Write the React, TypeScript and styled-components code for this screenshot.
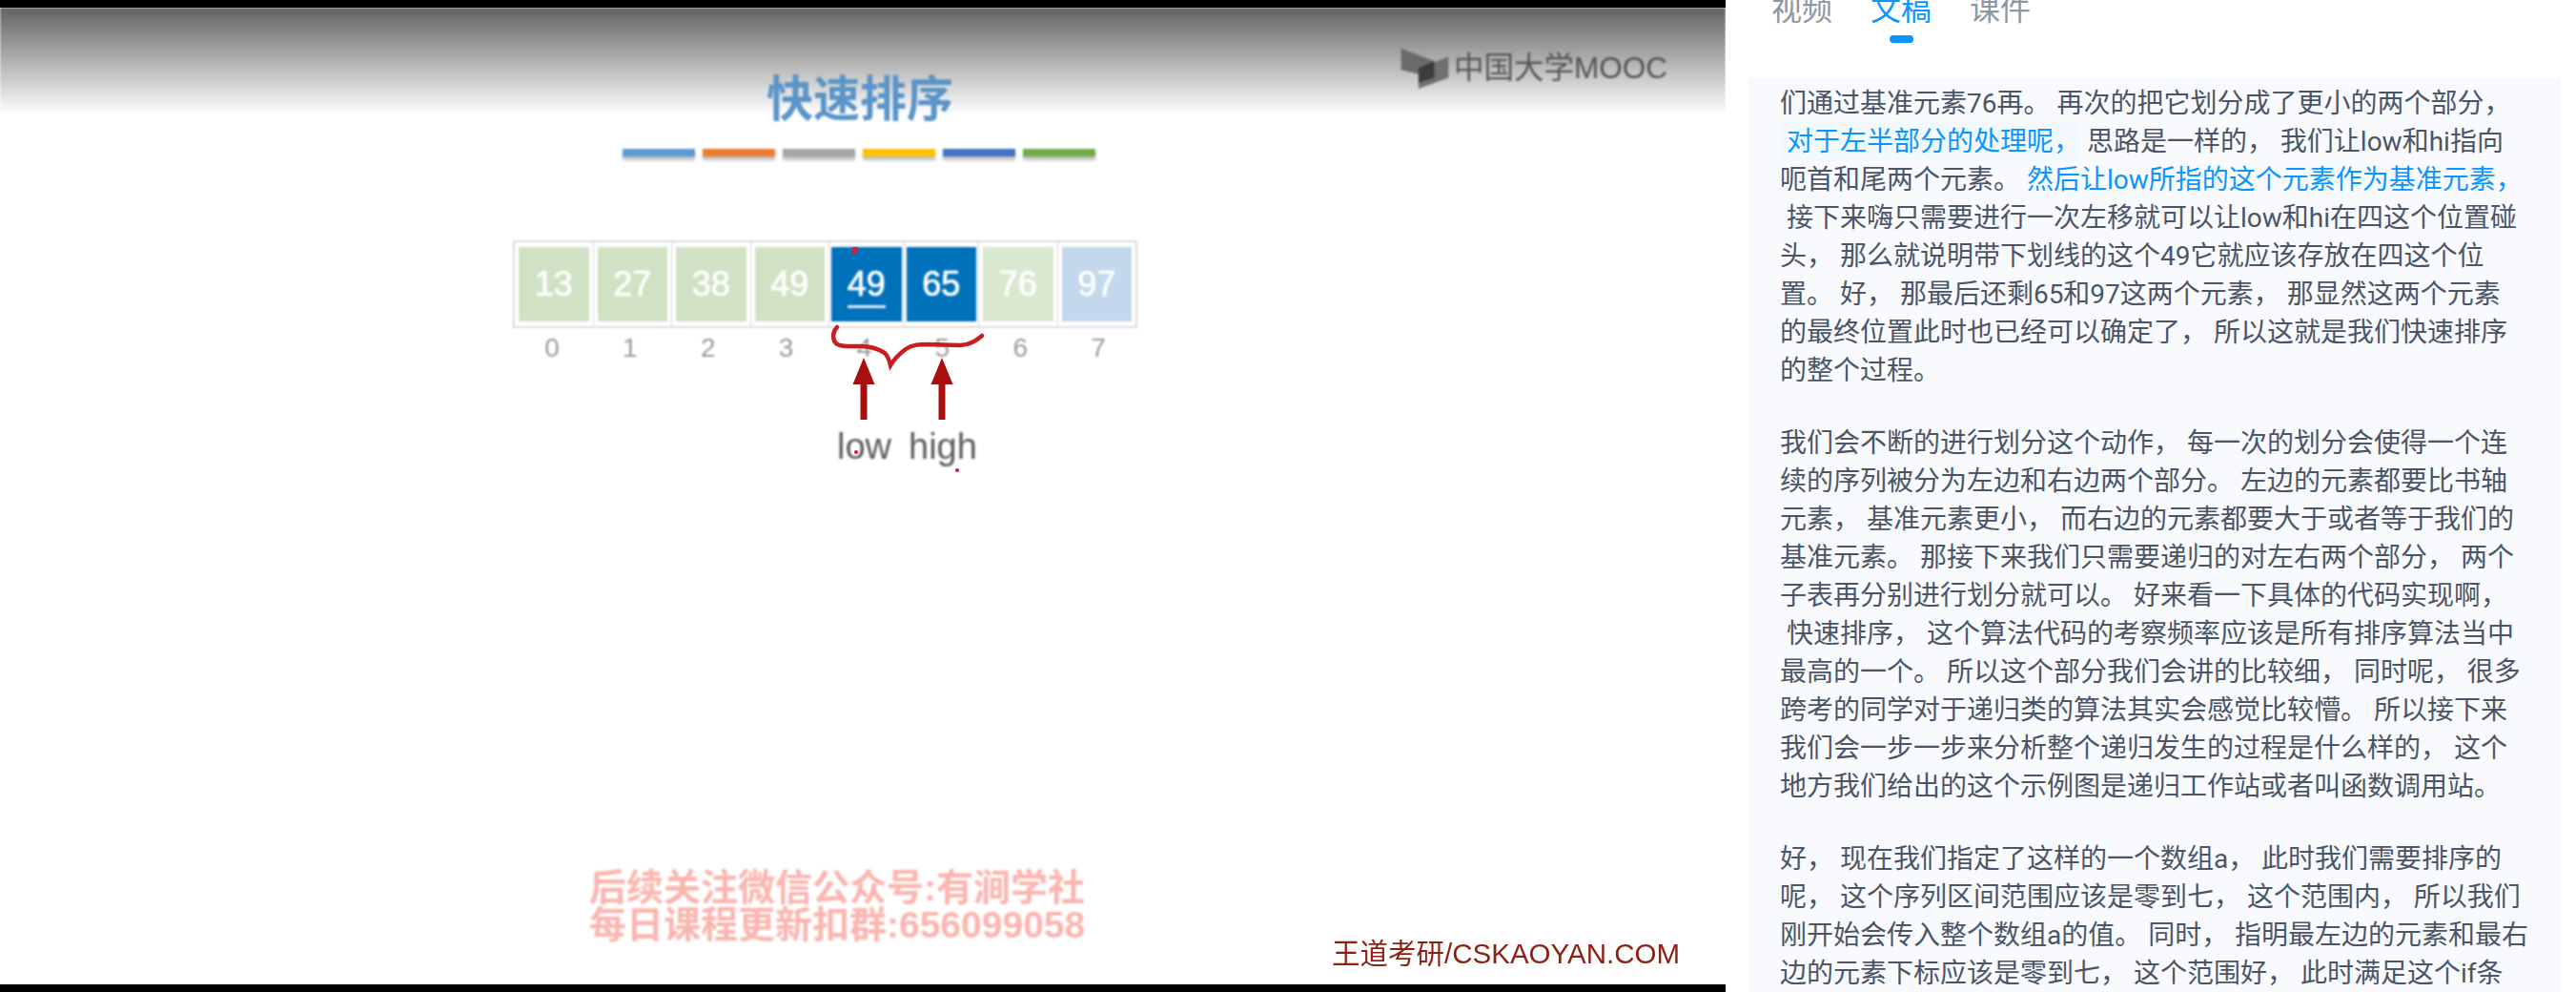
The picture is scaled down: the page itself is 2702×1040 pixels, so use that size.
import styled, { createGlobalStyle } from 'styled-components';

const GlobalStyle = createGlobalStyle`
  html, body {
    margin: 0;
    padding: 0;
    height: 100%;
    background: #fff;
    overflow: hidden;
  }
  body {
    font-family: Roboto, "Noto Sans CJK SC", sans-serif;
  }
`;

const Page = styled.div`
  display: flex;
  width: 2702px;
  height: 1040px;
  overflow: hidden;
`;

// video frame, left side
const Video = styled.div`
  position: relative;
  flex: 0 0 1810px;
  height: 1040px;
  display: flex;
  flex-direction: column;
  background: #fff;
  border-top: 8px solid #000;
  border-bottom: 8px solid #000;
  box-sizing: border-box;
  overflow: hidden;
`;

const Slide = styled.div`
  flex: 1;
  display: flex;
  flex-direction: column;
  align-items: center;
  background: linear-gradient(#636363 0, #fff 112px);
  background-size: 100% 112px;
  background-repeat: no-repeat;
  filter: blur(0.9px);
`;

const Title = styled.h1`
  margin: 72px 0 0;
  font-size: 49px;
  line-height: 48px;
  font-weight: 700;
  font-family: "Liberation Sans", "Noto Sans CJK SC", sans-serif;
  color: #5b94c8;
  transform: translateX(-3px) scaleY(1.04);
`;

const ColorBars = styled.div`
  display: flex;
  gap: 8px;
  margin-top: 28px;
  transform: translateX(-4px);
`;

const ColorBar = styled.div<{ $color: string }>`
  width: 76px;
  height: 8px;
  background: ${(p) => p.$color};
  box-shadow: 0 4px 3px rgba(0, 0, 0, 0.25);
`;

const ArrayBlock = styled.div`
  display: flex;
  flex-direction: column;
  align-self: flex-start;
  margin: 88px 0 0 538px;
  width: 655px;
`;

const Cells = styled.div`
  display: flex;
  height: 92px;
  box-sizing: border-box;
  border: 2px solid #dcdcdc;
`;

const Cell = styled.div<{ $narrow?: boolean }>`
  flex: 1;
  display: flex;
  padding: 5px ${(p) => (p.$narrow ? 2 : 4)}px;
  box-sizing: border-box;
  border-left: 1px solid #d8d8d8;
  &:first-child {
    border-left: 0;
  }
`;

const Tile = styled.div<{ $bg: string }>`
  flex: 1;
  display: flex;
  align-items: center;
  justify-content: center;
  background: ${(p) => p.$bg};
  color: #fff;
  font-family: "Liberation Sans", sans-serif;
  font-size: 36px;
  -webkit-text-stroke: 0.7px #fff;
`;

const Underlined = styled.span`
  position: relative;
  &::after {
    content: '';
    position: absolute;
    left: 0;
    right: 0;
    bottom: -4px;
    height: 3px;
    background: #dfe9f2;
  }
`;

const Indexes = styled.div`
  display: flex;
  margin-top: 5px;
`;

const Index = styled.div`
  flex: 1;
  text-align: center;
  font-family: "Liberation Sans", sans-serif;
  font-size: 28px;
  line-height: 32px;
  color: #9a9a9a;
`;

// pen strokes and arrows sit on top of the slide
const Annotation = styled.svg`
  position: absolute;
  left: 860px;
  top: 240px;
  filter: blur(0.5px);
`;

const PointerLabels = styled.div`
  align-self: flex-start;
  display: flex;
  gap: 18px;
  margin: 67px 0 0 878px;
  font-family: "Liberation Sans", sans-serif;
  font-size: 38px;
  line-height: 40px;
  color: #5c5c5c;
`;

const Watermark = styled.div`
  align-self: flex-start;
  margin: 423px 0 0 618px;
  font-family: "Liberation Sans", "Noto Sans CJK SC", sans-serif;
  font-weight: 700;
  font-size: 39px;
  line-height: 39px;
  color: #fbb5af;
  white-space: nowrap;
`;

const Brand = styled.div`
  position: absolute;
  right: 48px;
  bottom: 16px;
  font-family: "Liberation Sans", "Noto Sans CJK SC", sans-serif;
  font-size: 29.5px;
  line-height: 32px;
  color: #8c1f10;
  white-space: nowrap;
  filter: blur(0.5px);
`;

const Logo = styled.div`
  position: absolute;
  left: 1468px;
  top: 40px;
  display: flex;
  align-items: center;
  gap: 4px;
  color: #555;
  font-family: "Liberation Sans", "Noto Sans CJK SC", sans-serif;
  font-size: 31.5px;
  line-height: 47px;
  filter: blur(0.8px);
`;

// transcript panel, right side
const Side = styled.div`
  flex: 1;
  display: flex;
  flex-direction: column;
  padding: 0 16px 0 24px;
  min-width: 0;
`;

const Tabs = styled.div`
  flex: 0 0 82px;
  display: flex;
  gap: 40px;
  padding-left: 24px;
  overflow: hidden;
`;

const Tab = styled.div<{ $active?: boolean }>`
  display: flex;
  flex-direction: column;
  align-items: center;
  margin-top: -13px;
  font-size: 32px;
  line-height: 46px;
  color: ${(p) => (p.$active ? '#0a95ff' : '#8f96a3')};
  &::after {
    content: '';
    display: ${(p) => (p.$active ? 'block' : 'none')};
    width: 25px;
    height: 8px;
    margin-top: 4px;
    border-radius: 4px;
    background: #0a95ff;
  }
`;

const Transcript = styled.div`
  flex: 1;
  background: #f8fafe;
  padding: 7px 0 0 33px;
  overflow: hidden;
`;

const Paragraph = styled.div`
  margin-bottom: 36px;
`;

const Line = styled.div`
  font-size: 28px;
  line-height: 40px;
  height: 40px;
  white-space: pre;
  color: #4b5566;
`;

const Mark = styled.span<{ $bg?: boolean }>`
  color: #0a95ff;
  ${(p) => p.$bg && `
    display: inline-block;
    background: #f1f8fe;
  `}
`;

const barColors = ['#5b9bd5', '#ed7d31', '#a5a5a5', '#ffc000', '#4472c4', '#70ad47'];

const tiles = [
  { n: 13, bg: '#d0e2c3' },
  { n: 27, bg: '#d0e2c3' },
  { n: 38, bg: '#d0e2c3' },
  { n: 49, bg: '#d0e2c3' },
  { n: 49, bg: '#0071bb', active: true, under: true },
  { n: 65, bg: '#0071bb', active: true },
  { n: 76, bg: '#dae8d0' },
  { n: 97, bg: '#c3d8ec' },
];

const para2 = [
  '我们会不断的进行划分这个动作， 每一次的划分会使得一个连',
  '续的序列被分为左边和右边两个部分。 左边的元素都要比书轴',
  '元素， 基准元素更小， 而右边的元素都要大于或者等于我们的',
  '基准元素。 那接下来我们只需要递归的对左右两个部分， 两个',
  '子表再分别进行划分就可以。 好来看一下具体的代码实现啊，',
  ' 快速排序， 这个算法代码的考察频率应该是所有排序算法当中',
  '最高的一个。 所以这个部分我们会讲的比较细， 同时呢， 很多',
  '跨考的同学对于递归类的算法其实会感觉比较懵。 所以接下来',
  '我们会一步一步来分析整个递归发生的过程是什么样的， 这个',
  '地方我们给出的这个示例图是递归工作站或者叫函数调用站。',
];

const para3 = [
  '好， 现在我们指定了这样的一个数组a， 此时我们需要排序的',
  '呢， 这个序列区间范围应该是零到七， 这个范围内， 所以我们',
  '刚开始会传入整个数组a的值。 同时， 指明最左边的元素和最右',
  '边的元素下标应该是零到七， 这个范围好， 此时满足这个if条',
];

function Pen() {
  return (
    <Annotation width="190" height="260" viewBox="0 0 190 260">
      <path
        d="M18 95 C13 100 13 108 17 112 C21 116 32 115 43 115 C50 115 60 117 68 122 C72 126 73 131 74 135 C77 130 82 124 90 118 C97 113 105 113 113 113 L147 114 C155 114 163 110 170 104"
        fill="none"
        stroke="#c81e1e"
        strokeWidth="4.5"
        strokeLinecap="round"
      />
      <path d="M46 127 L34.5 155 L42.5 155 L42.5 192 L49.5 192 L49.5 155 L57.5 155 Z" fill="#a80f0f" />
      <path d="M128 127 L116.5 155 L124.5 155 L124.5 192 L131.5 192 L131.5 155 L139.5 155 Z" fill="#a80f0f" />
      <rect x="34" y="11" width="6" height="6" fill="#d0203a" />
      <circle cx="38" cy="226" r="2" fill="#c81e2e" />
      <circle cx="144" cy="245" r="2" fill="#c81e2e" />
    </Annotation>
  );
}

export default function App() {
  return (
    <Page>
      <GlobalStyle />
      <Video>
        <Slide>
          <Title>快速排序</Title>
          <ColorBars>
            {barColors.map((c) => (
              <ColorBar key={c} $color={c} />
            ))}
          </ColorBars>
          <ArrayBlock>
            <Cells>
              {tiles.map((t, i) => (
                <Cell key={i} $narrow={t.active}>
                  <Tile $bg={t.bg}>{t.under ? <Underlined>{t.n}</Underlined> : t.n}</Tile>
                </Cell>
              ))}
            </Cells>
            <Indexes>
              {tiles.map((_, i) => (
                <Index key={i}>{i}</Index>
              ))}
            </Indexes>
          </ArrayBlock>
          <PointerLabels>
            <span>low</span>
            <span>high</span>
          </PointerLabels>
          <Watermark>
            后续关注微信公众号:有涧学社
            <br />
            每日课程更新扣群:656099058
          </Watermark>
        </Slide>
        <Pen />
        <Logo>
          <svg width="53" height="47" viewBox="55 25 160 140">
            <polygon points="60,32 165,72 165,125 60,100" fill="#6a6a6a" />
            <polygon points="115,95 210,58 210,125 115,160" fill="#707070" />
            <polygon points="115,95 165,72 165,125 115,140" fill="#3c3c3c" />
          </svg>
          <span>中国大学MOOC</span>
        </Logo>
        <Brand>王道考研/CSKAOYAN.COM</Brand>
      </Video>
      <Side>
        <Tabs>
          <Tab>视频</Tab>
          <Tab $active>文稿</Tab>
          <Tab>课件</Tab>
        </Tabs>
        <Transcript>
          <Paragraph>
            <Line>们通过基准元素76再。 再次的把它划分成了更小的两个部分，</Line>
            <Line>
              <Mark $bg> 对于左半部分的处理呢，</Mark> 思路是一样的， 我们让low和hi指向
            </Line>
            <Line>
              呃首和尾两个元素。 <Mark>然后让low所指的这个元素作为基准元素，</Mark>
            </Line>
            <Line> 接下来嗨只需要进行一次左移就可以让low和hi在四这个位置碰</Line>
            <Line>头， 那么就说明带下划线的这个49它就应该存放在四这个位</Line>
            <Line>置。 好， 那最后还剩65和97这两个元素， 那显然这两个元素</Line>
            <Line>的最终位置此时也已经可以确定了， 所以这就是我们快速排序</Line>
            <Line>的整个过程。</Line>
          </Paragraph>
          <Paragraph>
            {para2.map((l) => (
              <Line key={l}>{l}</Line>
            ))}
          </Paragraph>
          <Paragraph>
            {para3.map((l) => (
              <Line key={l}>{l}</Line>
            ))}
          </Paragraph>
        </Transcript>
      </Side>
    </Page>
  );
}
